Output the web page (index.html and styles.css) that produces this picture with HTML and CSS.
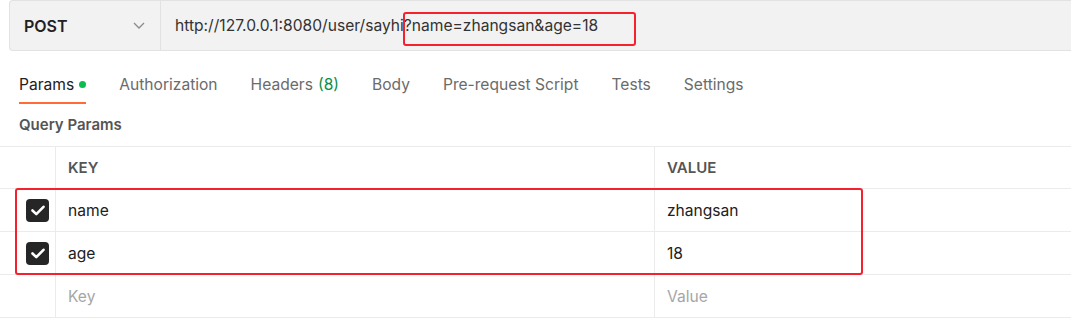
FILE: index.html
```html
<!DOCTYPE html>
<html lang="en">
<head>
    <meta charset="UTF-8">
    <meta name="viewport" content="width=device-width, initial-scale=1.0">
    <title>Params</title>
    <link rel="stylesheet" href="styles.css">
</head>
<body>
    <div class="request-bar">
        <div class="method">
            <span>POST</span>
            <svg class="chevron" width="12" height="7" viewBox="0 0 12 7"><path d="M1 1l5 5 5-5" fill="none" stroke="#8a8a8a" stroke-width="1.3"/></svg>
        </div>
        <div class="url">http://127.0.0.1:8080/user/sayhi<span class="mark">?name=zhangsan&amp;age=18</span></div>
    </div>

    <div class="tabs">
        <div class="tab active">Params <span class="dot"></span></div>
        <div class="tab">Authorization</div>
        <div class="tab">Headers <span class="count">(8)</span></div>
        <div class="tab">Body</div>
        <div class="tab">Pre-request Script</div>
        <div class="tab">Tests</div>
        <div class="tab">Settings</div>
    </div>

    <div class="section-title">Query Params</div>

    <div class="table">
        <div class="row head">
            <div class="cell check"></div>
            <div class="cell key">KEY</div>
            <div class="cell value">VALUE</div>
        </div>
        <div class="row">
            <div class="cell check"><span class="box"><svg width="14" height="11" viewBox="0 0 14 11"><path d="M1.5 5.5l3.8 3.6L12.5 1.8" fill="none" stroke="#fff" stroke-width="2.6" stroke-linecap="round" stroke-linejoin="round"/></svg></span></div>
            <div class="cell key">name</div>
            <div class="cell value">zhangsan</div>
        </div>
        <div class="row">
            <div class="cell check"><span class="box"><svg width="14" height="11" viewBox="0 0 14 11"><path d="M1.5 5.5l3.8 3.6L12.5 1.8" fill="none" stroke="#fff" stroke-width="2.6" stroke-linecap="round" stroke-linejoin="round"/></svg></span></div>
            <div class="cell key">age</div>
            <div class="cell value">18</div>
        </div>
        <div class="row">
            <div class="cell check"></div>
            <div class="cell key placeholder">Key</div>
            <div class="cell value placeholder">Value</div>
        </div>
        <div class="highlight"></div>
    </div>
</body>
</html>
```

FILE: styles.css
```css
body {
    font-family: Inter, "Noto Sans", sans-serif;
    background-color: #fff;
    color: #212121;
    margin: 0;
    padding: 0;
}

.request-bar {
    display: flex;
    height: 49px;
    margin-left: 9px;
    background-color: #f2f2f2;
    border: 1px solid #e2e2e2;
    border-right: none;
    border-radius: 4px 0 0 4px;
}

.method {
    width: 136px;
    padding-left: 14px;
    display: flex;
    align-items: center;
    justify-content: space-between;
    border-right: 1px solid #e2e2e2;
    font-size: 16px;
    font-weight: 600;
}

.chevron {
    margin-right: 15px;
}

.url {
    display: flex;
    align-items: center;
    padding-left: 14px;
    font-size: 15.6px;
    color: #333;
}

.mark {
    position: relative;
}

.mark::after {
    content: "";
    position: absolute;
    left: -1px;
    top: -4px;
    width: 229px;
    height: 30px;
    border: 2px solid #f5222d;
    border-radius: 3px;
}

.tabs {
    display: flex;
    gap: 33px;
    padding-left: 19px;
    margin-top: 24px;
}

.tab {
    font-size: 15.6px;
    color: #6b6b6b;
    padding: 0 0 8px;
    border-bottom: 2px solid transparent;
    display: flex;
    align-items: center;
    gap: 5px;
}

.tab.active {
    color: #212121;
    border-bottom-color: #ff6c37;
}

.dot {
    width: 7px;
    height: 7px;
    border-radius: 50%;
    background-color: #0cbb52;
}

.count {
    color: #0a8f4a;
}

.section-title {
    font-size: 15px;
    font-weight: 600;
    color: #555;
    padding: 11px 19px 12px;
}

.table {
    position: relative;
    border-top: 1px solid #ebebeb;
}

.row {
    display: flex;
    height: 42px;
    border-bottom: 1px solid #ebebeb;
}

.row.head {
    height: 41px;
}

.cell {
    display: flex;
    align-items: center;
    font-size: 15.6px;
}

.check {
    width: 55px;
    flex-shrink: 0;
    padding-left: 26px;
    box-sizing: border-box;
}

.key {
    width: 599px;
    flex-shrink: 0;
    padding-left: 12px;
    box-sizing: border-box;
    border-left: 1px solid #ebebeb;
}

.value {
    flex: 1;
    padding-left: 12px;
    border-left: 1px solid #ebebeb;
}

.head .cell {
    font-size: 15px;
    font-weight: 600;
    color: #555;
}

.placeholder {
    color: #a6a6a6;
}

.box {
    width: 23px;
    height: 23px;
    flex-shrink: 0;
    border-radius: 4px;
    background-color: #262626;
    display: flex;
    align-items: center;
    justify-content: center;
}

.highlight {
    position: absolute;
    left: 15px;
    top: 41px;
    width: 844px;
    height: 83px;
    border: 2px solid #f5222d;
    border-radius: 3px;
}
```
